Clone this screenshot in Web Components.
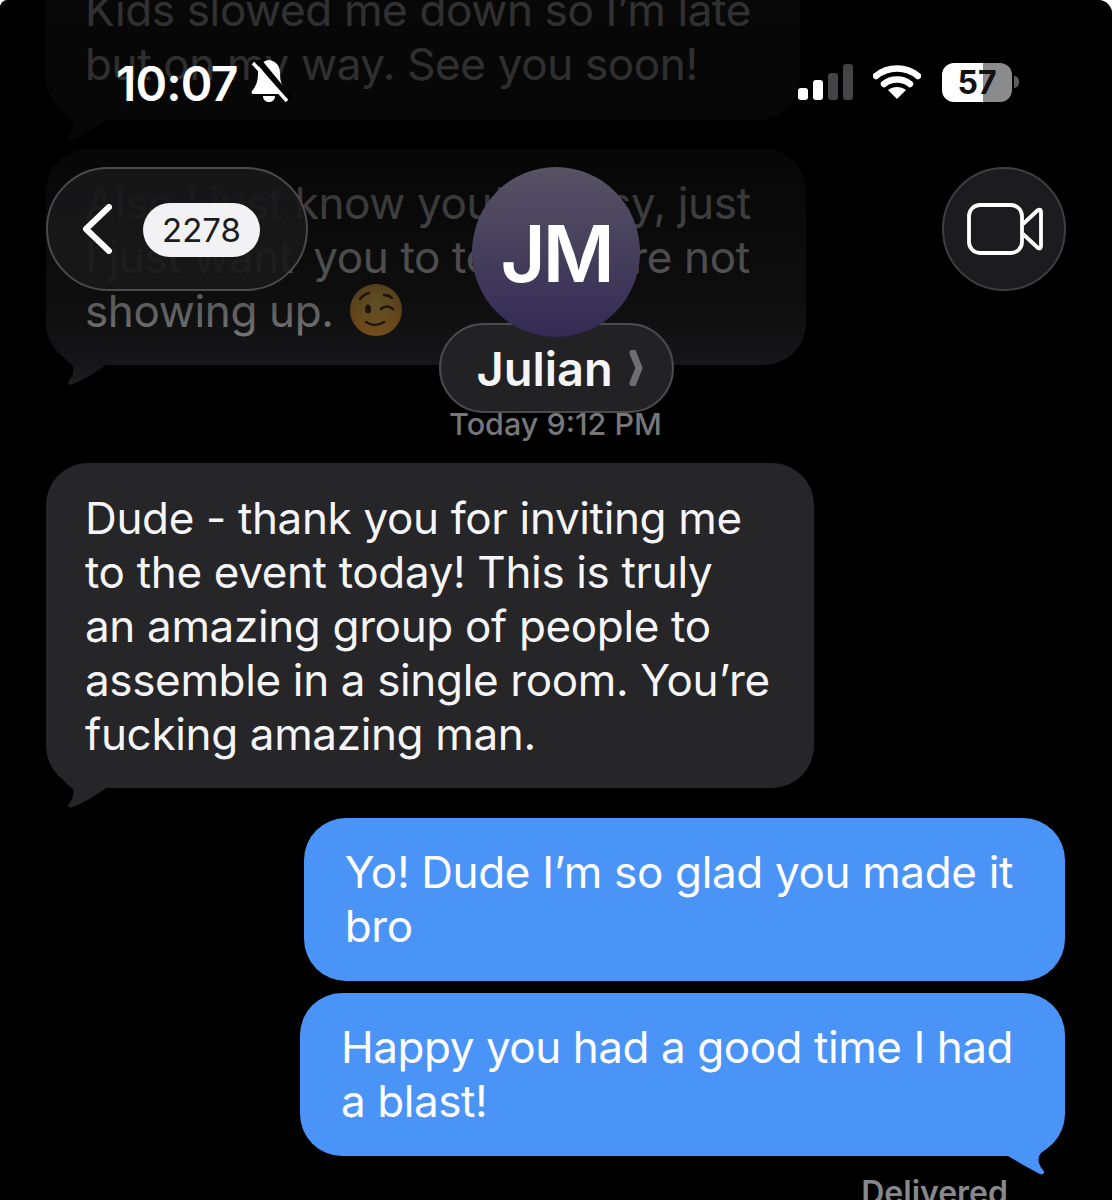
<!DOCTYPE html>
<html lang="en">
<head>
<meta charset="utf-8">
<title>Julian</title>
<style>
  html { background: #fff; }
  body { margin: 0; font-family: "Inter", "Liberation Sans", sans-serif; }
</style>
</head>
<body>
<chat-screen>
  <chat-thread>
    <chat-bubble faded first>Kids slowed me down so I’m late<br>but on my way. See you soon!</chat-bubble>
    <chat-bubble faded>Also I just know you’re busy, just<br><span style="margin-right:8px">I just want</span> you to tell if we’re not<br>showing up. <wink-emoji></wink-emoji></chat-bubble>
    <chat-stamp>Today 9:12 PM</chat-stamp>
    <chat-bubble>Dude - thank you for inviting me<br>to the event today! This is truly<br>an amazing group of people to<br>assemble in a single room. You’re<br>fucking amazing man.</chat-bubble>
    <chat-bubble me no-tail>Yo! Dude I’m so glad you made it<br>bro</chat-bubble>
    <chat-bubble me style="letter-spacing:-.45px">Happy you had a good time I had<br>a blast!</chat-bubble>
    <chat-receipt>Delivered</chat-receipt>
  </chat-thread>
  <chat-fade slot="over"></chat-fade>
  <status-bar slot="over"></status-bar>
  <chat-header slot="over"></chat-header>
</chat-screen>

<script>
class ChatScreen extends HTMLElement {
    constructor() {
        super();
        this.attachShadow({ mode: "open" });
        this.shadowRoot.innerHTML = `
            <style>
                :host {
                    display: block;
                    position: relative;
                    width: 1112px;
                    height: 1200px;
                    overflow: hidden;
                    border-radius: 8px 14px 0 0;
                    background: #000;
                    color: #f5f5f7;
                }
            </style>
            <slot></slot>
            <slot name="over"></slot>
        `;
    }
}

class ChatThread extends HTMLElement {
    constructor() {
        super();
        this.attachShadow({ mode: "open" });
        this.shadowRoot.innerHTML = `
            <style>
                :host {
                    display: flex;
                    flex-direction: column;
                    margin-top: -42px;
                    padding: 0 47px 0 46px;
                }
            </style>
            <slot></slot>
        `;
    }
}

class ChatBubble extends HTMLElement {
    constructor() {
        super();
        this.attachShadow({ mode: "open" });
        this.shadowRoot.innerHTML = `
            <style>
                :host {
                    display: block;
                    position: relative;
                    align-self: flex-start;
                    box-sizing: border-box;
                    margin-bottom: 30px;
                    padding: 28px 44px 27px 39px;
                    border-radius: 42px;
                    background: #262629;
                    font-size: 44px;
                    line-height: 54px;
                    letter-spacing: -0.35px;
                    white-space: nowrap;
                    color: #f5f5f7;
                }
                :host([faded]) { margin-bottom: 29px; padding: 27px 55px 27px 39px; }
                :host([first]) { padding: 25px 49px 29px 39px; }
                :host([me]) {
                    align-self: flex-end;
                    padding: 27px 52px 28px 41px;
                    background: #4b94f7;
                    color: #fff;
                }
                :host([no-tail]) { margin-bottom: 12px; }
                svg {
                    position: absolute;
                    bottom: -20px;
                    left: 0;
                    display: block;
                }
                :host([me]) svg { left: auto; right: 0; }
                :host([no-tail]) svg { display: none; }
                :host([me]) .got { display: none; }
                :host(:not([me])) .sent { display: none; }
            </style>
            <svg class="got" width="70" height="50" viewBox="0 0 70 50">
                <path fill="#262629" d="M3 0C9 14 18 24 27 31C29 38 25 43 22 47C22 50 25 50 27 49C38 45 50 37 60 30L60 0Z"/>
            </svg>
            <svg class="sent" width="70" height="70" viewBox="0 0 70 70">
                <path fill="#4b94f7" d="M5 50L13 50C25 57 35 63 45 68C49 69 50 66 48 64C43 58 42 52 46 47C56 40 64 30 69 12L5 12Z"/>
            </svg>
            <slot></slot>
        `;
    }
}

class ChatStamp extends HTMLElement {
    constructor() {
        super();
        this.attachShadow({ mode: "open" });
        this.shadowRoot.innerHTML = `
            <style>
                :host {
                    display: block;
                    text-align: center;
                    margin: 3px 0 12px;
                    font-size: 30.5px;
                    line-height: 54px;
                    height: 54px;
                    font-weight: 500;
                    color: #77777a;
                }
            </style>
            <slot></slot>
        `;
    }
}

class ChatReceipt extends HTMLElement {
    constructor() {
        super();
        this.attachShadow({ mode: "open" });
        this.shadowRoot.innerHTML = `
            <style>
                :host {
                    display: block;
                    text-align: right;
                    margin-top: -11px;
                    padding-right: 57px;
                    font-size: 32px;
                    line-height: 36px;
                    font-weight: 600;
                    color: #88888c;
                }
            </style>
            <slot></slot>
        `;
    }
}

class WinkEmoji extends HTMLElement {
    constructor() {
        super();
        this.attachShadow({ mode: "open" });
        this.shadowRoot.innerHTML = `
            <style>
                :host { display: inline-block; width: 52px; height: 52px; margin: -10px 0 -10px 4px; vertical-align: 1px; }
                svg { display: block; }
            </style>
            <svg width="52" height="52" viewBox="0 0 52 52">
                <defs>
                    <radialGradient id="f" cx="50%" cy="35%" r="70%">
                        <stop offset="0" stop-color="#ffd76a"/>
                        <stop offset="1" stop-color="#f09a2e"/>
                    </radialGradient>
                </defs>
                <circle cx="26" cy="26" r="26" fill="url(#f)"/>
                <ellipse cx="18" cy="25" rx="3" ry="4.6" fill="#4a3016"/>
                <path d="M31 25q6-5 12 0M10 15q4-5 9-6M34 11q5 0 8 3" fill="none" stroke="#4a3016" stroke-width="2.4" stroke-linecap="round"/>
                <path d="M16 38q9 6 18 0" fill="none" stroke="#4a3016" stroke-width="2.6" stroke-linecap="round"/>
            </svg>
        `;
    }
}

// Dims the older bubbles under the header
class ChatFade extends HTMLElement {
    constructor() {
        super();
        this.attachShadow({ mode: "open" });
        this.shadowRoot.innerHTML = `
            <style>
                :host {
                    position: absolute;
                    left: 0;
                    top: 0;
                    right: 0;
                    height: 400px;
                    pointer-events: none;
                    background: linear-gradient(to bottom,
                        rgba(0,0,0,.8) 0,
                        rgba(0,0,0,.82) 150px,
                        rgba(0,0,0,.76) 205px,
                        rgba(0,0,0,.62) 310px,
                        rgba(0,0,0,.42) 365px,
                        rgba(0,0,0,0) 400px);
                }
            </style>
        `;
    }
}

class StatusBar extends HTMLElement {
    constructor() {
        super();
        this.attachShadow({ mode: "open" });
        this.shadowRoot.innerHTML = `
            <style>
                :host {
                    position: absolute;
                    left: 0;
                    top: 58px;
                    right: 0;
                    display: flex;
                    align-items: center;
                    height: 48px;
                    padding: 0 93px 0 116px;
                    color: #fff;
                }
                .time {
                    margin-top: 3px;
                    font-size: 48px;
                    font-weight: 600;
                    letter-spacing: -0.8px;
                    line-height: 48px;
                }
                .bell { margin-left: 13px; }
                .right { margin-left: auto; display: flex; align-items: center; }
                .wifi { margin-left: 20px; }
                svg { display: block; }
                .battery {
                    margin-left: 21px;
                    width: 70px;
                    height: 39px;
                    border-radius: 12px;
                    overflow: hidden;
                    background: linear-gradient(to right, #fff 0, #fff 41px, #8b8b8d 41px);
                    color: #111;
                    font-size: 32px;
                    font-weight: 700;
                    line-height: 39px;
                    text-align: center;
                }
                .nub {
                    width: 5px;
                    height: 12px;
                    margin-left: 2px;
                    background: #5c5c5e;
                    border-radius: 0 6px 6px 0;
                }
            </style>
            <span class="time">10:07</span>
            <svg class="bell" width="40" height="44" viewBox="0 0 40 44">
                <path fill="#fff" d="M18 0C11 1 7 6 7 13C7 22 5 26 1 31C0 33 1 34 3 34L33 34C35 34 36 33 35 31C31 26 29 22 29 13C29 6 25 1 18 0Z"/>
                <path fill="#fff" d="M12 36L24 36C24 40 21 42 18 42C15 42 12 40 12 36Z"/>
                <path d="M6 -1L39 39" stroke="#000" stroke-width="6"/>
                <path d="M2 3L36 41" stroke="#fff" stroke-width="3.4"/>
            </svg>
            <div class="right">
                <svg width="55" height="36" viewBox="0 0 55 36">
                    <rect x="0" y="24" width="10" height="12" rx="3" fill="#fff"/>
                    <rect x="15" y="16" width="10" height="20" rx="3" fill="#fff"/>
                    <rect x="30" y="9" width="10" height="27" rx="3" fill="#444446"/>
                    <rect x="45" y="0" width="10" height="36" rx="3" fill="#444446"/>
                </svg>
                <svg class="wifi" width="48" height="36" viewBox="0 0 48 36">
                    <path d="M3 12C15 2 33 2 45 12" fill="none" stroke="#fff" stroke-width="6.5" stroke-linecap="round"/>
                    <path d="M11 20C18 14 30 14 37 20" fill="none" stroke="#fff" stroke-width="6.5" stroke-linecap="round"/>
                    <path d="M24 35L15 26C20 22 28 22 33 26Z" fill="#fff"/>
                </svg>
                <div class="battery">57</div>
                <div class="nub"></div>
            </div>
        `;
    }
}

class ChatHeader extends HTMLElement {
    constructor() {
        super();
        this.attachShadow({ mode: "open" });
        this.shadowRoot.innerHTML = `
            <style>
                :host {
                    position: absolute;
                    left: 46px;
                    right: 46px;
                    top: 167px;
                    display: grid;
                    grid-template-columns: 1fr 235px 1fr;
                    align-items: start;
                }
                .back {
                    box-sizing: border-box;
                    justify-self: start;
                    display: flex;
                    align-items: center;
                    gap: 31px;
                    width: 262px;
                    height: 124px;
                    padding-left: 34px;
                    border-radius: 62px;
                    border: 2px solid #4b4b4d;
                    background: rgba(24,24,26,.9);
                }
                .count {
                    width: 117px;
                    height: 54px;
                    margin-top: 1px;
                    border-radius: 27px;
                    background: #f2f2f4;
                    color: #1c1c1e;
                    font-size: 33px;
                    line-height: 54px;
                    text-align: center;
                }
                .who {
                    display: flex;
                    flex-direction: column;
                    align-items: center;
                }
                .avatar {
                    position: relative;
                    z-index: 1;
                    width: 168px;
                    height: 170px;
                    border-radius: 50%;
                    background: linear-gradient(to bottom, #575364, #332b55);
                    color: #fff;
                    font-size: 78px;
                    font-weight: 600;
                    letter-spacing: -3px;
                    line-height: 174px;
                    text-align: center;
                }
                .name {
                    box-sizing: border-box;
                    display: flex;
                    align-items: center;
                    gap: 16px;
                    width: 235px;
                    height: 90px;
                    margin-top: -14px;
                    padding-left: 36px;
                    border-radius: 45px;
                    border: 2px solid #4b4b4d;
                    background: #222224;
                    color: #f5f5f7;
                    font-size: 47px;
                    font-weight: 600;
                }
                .video {
                    box-sizing: border-box;
                    justify-self: end;
                    display: flex;
                    align-items: center;
                    justify-content: center;
                    width: 124px;
                    height: 124px;
                    padding-left: 2px;
                    border-radius: 50%;
                    border: 2px solid #3f3f41;
                    background: #1c1c1e;
                }
                svg { display: block; }
            </style>
            <div class="back">
                <svg width="30" height="50" viewBox="0 0 30 50">
                    <path d="M27 3L4 25L27 47" fill="none" stroke="#fff" stroke-width="6" stroke-linecap="round" stroke-linejoin="round"/>
                </svg>
                <div class="count">2278</div>
            </div>
            <div class="who">
                <div class="avatar">JM</div>
                <div class="name">Julian
                    <svg width="14" height="36" viewBox="0 0 14 36">
                        <path d="M4 3L10 18L4 33" fill="none" stroke="#6e6e70" stroke-width="7" stroke-linecap="round" stroke-linejoin="round"/>
                    </svg>
                </div>
            </div>
            <div class="video">
                <svg width="76" height="52" viewBox="0 0 76 52">
                    <rect x="2" y="2" width="53" height="48" rx="11" fill="none" stroke="#fff" stroke-width="3.8"/>
                    <path d="M56 21L71 7C73 6 74 7 74 9L74 43C74 45 73 46 71 45L56 31" fill="none" stroke="#fff" stroke-width="3.8" stroke-linejoin="round"/>
                </svg>
            </div>
        `;
    }
}

customElements.define("chat-screen", ChatScreen);
customElements.define("chat-thread", ChatThread);
customElements.define("chat-bubble", ChatBubble);
customElements.define("chat-stamp", ChatStamp);
customElements.define("chat-receipt", ChatReceipt);
customElements.define("wink-emoji", WinkEmoji);
customElements.define("chat-fade", ChatFade);
customElements.define("status-bar", StatusBar);
customElements.define("chat-header", ChatHeader);
</script>
</body>
</html>
